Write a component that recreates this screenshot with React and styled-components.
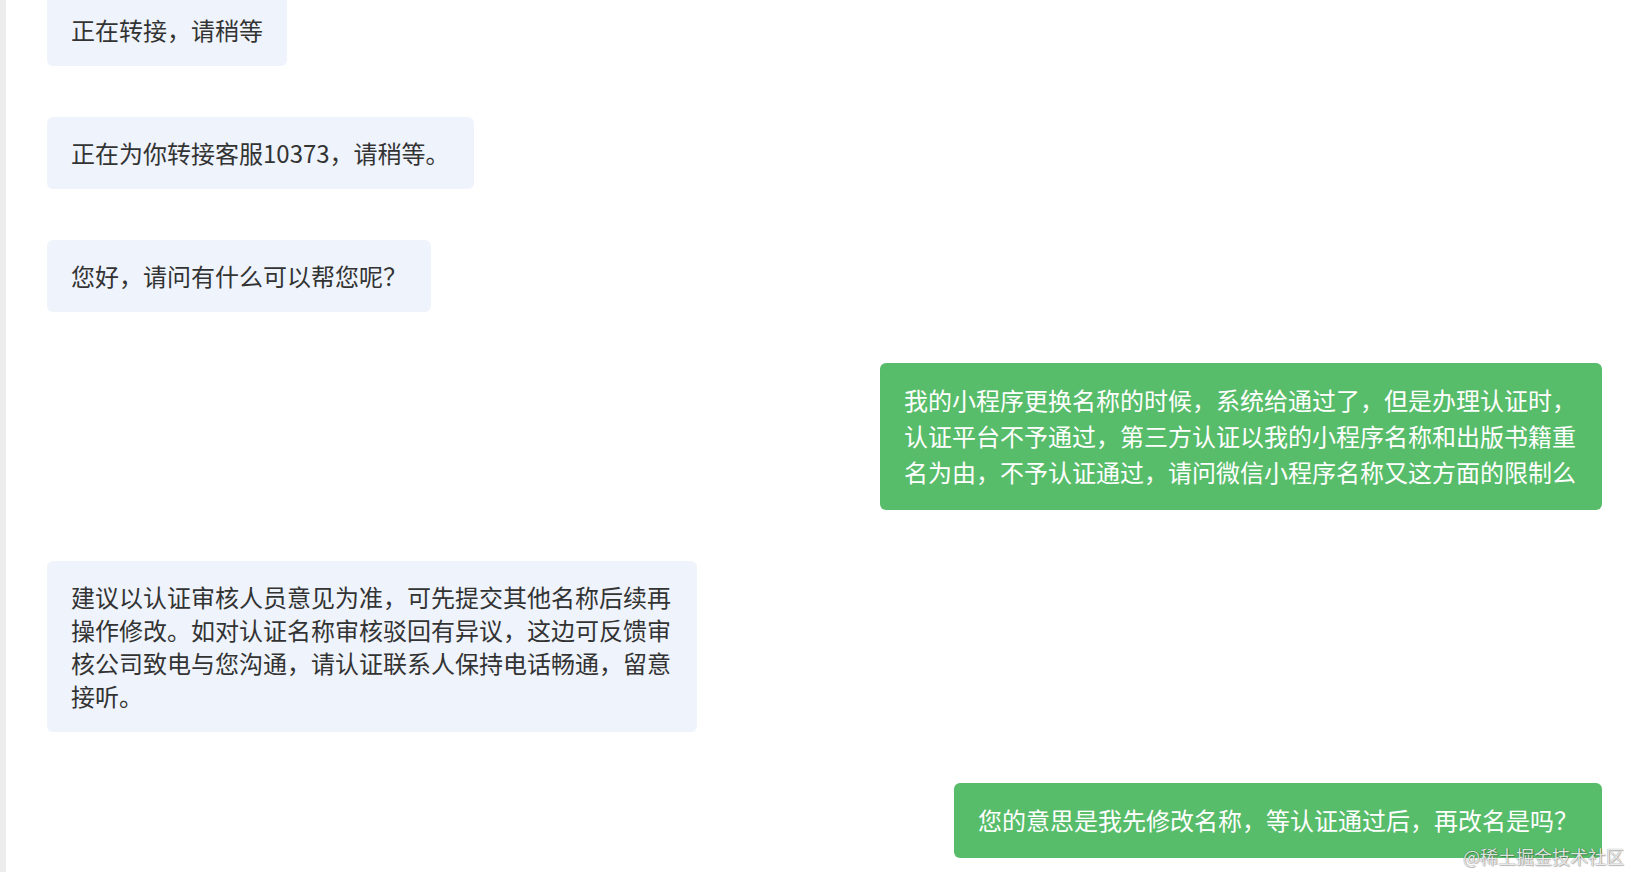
import styled, { createGlobalStyle } from "styled-components";

const GlobalStyle = createGlobalStyle`
  html, body {
    margin: 0;
    padding: 0;
    background: #ffffff;
    overflow: hidden;
  }
  body {
    font-family: "Noto Sans CJK SC", "Noto Sans", sans-serif;
  }
`;

const Page = styled.div`
  position: relative;
  display: flex;
  height: 872px;
  overflow: hidden;
`;

const EdgeBar = styled.div`
  flex: 0 0 6px;
  background: #ededed;
`;

const ChatList = styled.div`
  flex: 1;
  display: flex;
  flex-direction: column;
  gap: 51px;
  margin-top: -6px;
  padding: 0 28px 0 41px;
`;

const Row = styled.div`
  display: flex;
  justify-content: ${(p) => (p.$mine ? "flex-end" : "flex-start")};
`;

const Bubble = styled.div`
  box-sizing: border-box;
  max-width: ${(p) => (p.$mine ? "722px" : "650px")};
  padding: 19px 24px 20px;
  border-radius: 6px;
  font-size: 24px;
  line-height: ${(p) => (p.$mine ? "36px" : "33px")};
  color: ${(p) => (p.$mine ? "#ffffff" : "#333333")};
  background: ${(p) => (p.$mine ? "#58bd6b" : "#eff3fc")};
  word-break: break-all;
`;

const Watermark = styled.div`
  position: absolute;
  right: 6px;
  bottom: 5px;
  font-size: 18px;
  line-height: 22px;
  color: rgba(255, 255, 255, 0.85);
  text-shadow: 0 0 1px rgba(0, 0, 0, 0.55), 1px 1px 1px rgba(0, 0, 0, 0.25);
  pointer-events: none;
`;

const messages = [
  { mine: false, text: "正在转接，请稍等" },
  { mine: false, text: "正在为你转接客服10373，请稍等。" },
  { mine: false, text: "您好，请问有什么可以帮您呢？" },
  {
    mine: true,
    text:
      "我的小程序更换名称的时候，系统给通过了，但是办理认证时，认证平台不予通过，第三方认证以我的小程序名称和出版书籍重名为由，不予认证通过，请问微信小程序名称又这方面的限制么"
  },
  {
    mine: false,
    text:
      "建议以认证审核人员意见为准，可先提交其他名称后续再操作修改。如对认证名称审核驳回有异议，这边可反馈审核公司致电与您沟通，请认证联系人保持电话畅通，留意接听。"
  },
  { mine: true, text: "您的意思是我先修改名称，等认证通过后，再改名是吗？" }
];

export default function App() {
  return (
    <Page>
      <GlobalStyle />
      <EdgeBar />
      <ChatList>
        {messages.map((m, i) => (
          <Row key={i} $mine={m.mine}>
            <Bubble $mine={m.mine}>{m.text}</Bubble>
          </Row>
        ))}
      </ChatList>
      <Watermark>@稀土掘金技术社区</Watermark>
    </Page>
  );
}
